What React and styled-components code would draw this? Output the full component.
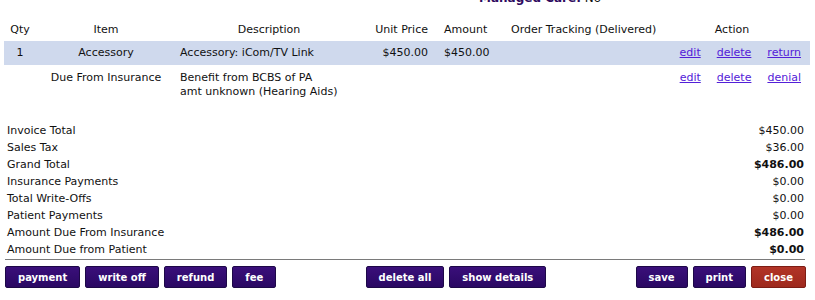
import React from "react";
import styled, { createGlobalStyle } from "styled-components";

const Global = createGlobalStyle`
  html, body { margin: 0; padding: 0; background: #fff; }
  body { font-family: "DejaVu Sans", Verdana, sans-serif; font-size: 11px; color: #111; }
`;

const Page = styled.div`
  width: 815px;
  height: 300px;
  overflow: hidden;
`;

const Shift = styled.div`
  margin-top: -9px;
`;

const Banner = styled.div`
  height: 14px;
  line-height: 14px;
  padding-left: 479px;
  font-size: 12px;
  color: #111;
  b { color: #2e0a5e; }
`;

const Items = styled.table`
  margin: 12px 0 0 4px;
  width: 806px;
  border-collapse: collapse;
  table-layout: fixed;
`;

const Th = styled.th`
  font-weight: normal;
  height: 24px;
  padding: 0 4px;
  text-align: ${(p) => p.$align || "center"};
  padding-right: ${(p) => (p.$pr != null ? p.$pr : 4)}px;
  white-space: nowrap;
`;

const Row = styled.tr`
  background: ${(p) => (p.$hl ? "#cfd9ed" : "transparent")};
`;

const Td = styled.td`
  padding: ${(p) => (p.$top ? "6px 4px 8px" : "0 4px")};
  height: ${(p) => (p.$top ? "auto" : "24px")};
  vertical-align: ${(p) => (p.$top ? "top" : "middle")};
  line-height: 14px;
  text-align: ${(p) => p.$align || "left"};
  padding-right: ${(p) => (p.$pr != null ? p.$pr : 4)}px;
  white-space: nowrap;
`;

const Actions = styled.div`
  display: flex;
  justify-content: flex-end;
  gap: 16px;
  padding-right: 5px;
`;

const Link = styled.a`
  color: #5320d8;
  text-decoration: underline;
  cursor: pointer;
`;

const Totals = styled.div`
  margin: 15px 10px 0 5px;
  padding: 0 1px 1px 2px;
  border-bottom: 1px solid #7a7a7a;
`;

const TotalRow = styled.div`
  display: flex;
  justify-content: space-between;
  height: 17px;
  line-height: 17px;
`;

const Value = styled.span`
  font-weight: ${(p) => (p.$bold ? "bold" : "normal")};
`;

const Bar = styled.div`
  display: flex;
  justify-content: space-between;
  margin: 6px 9px 0 5px;
`;

const Group = styled.div`
  display: flex;
  gap: 5px;
`;

const Button = styled.button`
  height: 22px;
  padding: 0 12px;
  border: 1px solid ${(p) => (p.$danger ? "#7d1d14" : "#1d0848")};
  border-radius: 2px;
  background: ${(p) =>
    p.$danger
      ? "linear-gradient(#b23427, #9e291d)"
      : "linear-gradient(#3a0f7a, #2a0863)"};
  color: #fff;
  font-family: "DejaVu Sans", Verdana, sans-serif;
  font-size: 10px;
  font-weight: bold;
  cursor: pointer;
`;

const totals = [
  ["Invoice Total", "$450.00"],
  ["Sales Tax", "$36.00"],
  ["Grand Total", "$486.00", true],
  ["Insurance Payments", "$0.00"],
  ["Total Write-Offs", "$0.00"],
  ["Patient Payments", "$0.00"],
  ["Amount Due From Insurance", "$486.00", true],
  ["Amount Due from Patient", "$0.00", true],
];

export default function App() {
  return (
    <Page>
      <Global />
      <Shift>
        <Banner>
          <b>Managed Care:</b> No
        </Banner>
        <Items>
          <colgroup>
            <col style={{ width: 32 }} />
            <col style={{ width: 140 }} />
            <col style={{ width: 186 }} />
            <col style={{ width: 78 }} />
            <col style={{ width: 67 }} />
            <col style={{ width: 157 }} />
            <col style={{ width: 146 }} />
          </colgroup>
          <thead>
            <tr>
              <Th>Qty</Th>
              <Th>Item</Th>
              <Th>Description</Th>
              <Th $align="right" $pr={12}>Unit Price</Th>
              <Th $align="left">Amount</Th>
              <Th $align="left">Order Tracking (Delivered)</Th>
              <Th $pr={14}>Action</Th>
            </tr>
          </thead>
          <tbody>
            <Row $hl>
              <Td $align="center">1</Td>
              <Td $align="center">Accessory</Td>
              <Td>Accessory: iCom/TV Link</Td>
              <Td $align="right" $pr={12}>$450.00</Td>
              <Td>$450.00</Td>
              <Td />
              <Td>
                <Actions>
                  <Link>edit</Link>
                  <Link>delete</Link>
                  <Link>return</Link>
                </Actions>
              </Td>
            </Row>
            <Row>
              <Td $top />
              <Td $top $align="center">Due From Insurance</Td>
              <Td $top>
                Benefit from BCBS of PA
                <br />
                amt unknown (Hearing Aids)
              </Td>
              <Td $top />
              <Td $top />
              <Td $top />
              <Td $top>
                <Actions>
                  <Link>edit</Link>
                  <Link>delete</Link>
                  <Link>denial</Link>
                </Actions>
              </Td>
            </Row>
          </tbody>
        </Items>
        <Totals>
          {totals.map(([label, val, bold]) => (
            <TotalRow key={label}>
              <span>{label}</span>
              <Value $bold={bold}>{val}</Value>
            </TotalRow>
          ))}
        </Totals>
        <Bar>
          <Group>
            <Button>payment</Button>
            <Button>write off</Button>
            <Button>refund</Button>
            <Button>fee</Button>
          </Group>
          <Group>
            <Button>delete all</Button>
            <Button>show details</Button>
          </Group>
          <Group>
            <Button>save</Button>
            <Button>print</Button>
            <Button $danger>close</Button>
          </Group>
        </Bar>
      </Shift>
    </Page>
  );
}
